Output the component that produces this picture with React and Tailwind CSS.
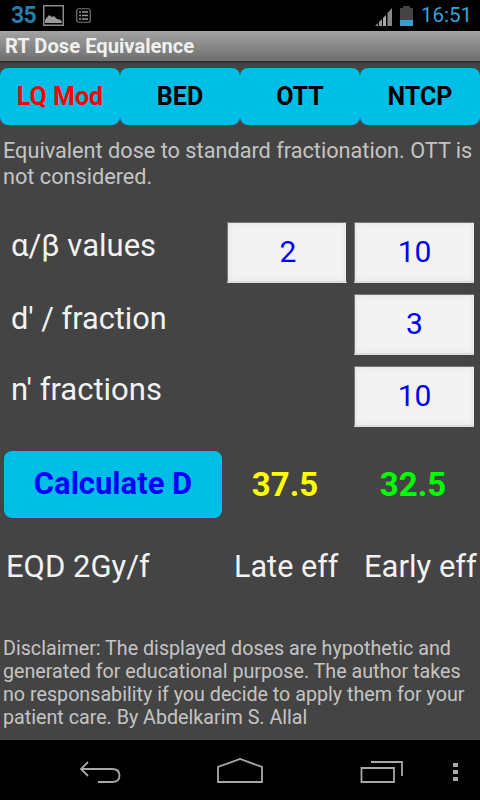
import { useState } from "react"

const tabs = ["LQ Mod", "BED", "OTT", "NTCP"]

function StatusBar() {
  return (
    <div className="h-[31px] bg-black flex items-center pl-[11px] pr-[8px]">
      <span className="text-[23px] font-bold text-[#2a7da6] leading-none tracking-tight w-[32px]">35</span>
      <svg width="21" height="21" viewBox="0 0 21 21">
        <rect x="0.75" y="0.75" width="19.5" height="19.5" fill="none" stroke="#8a8a8a" strokeWidth="1.5" />
        <path d="M2 18 L2 15 L6 10 L9 12 L11 11 L14 14 L18 15 L19 18 Z" fill="#9a9a9a" />
      </svg>
      <svg width="15" height="15" viewBox="0 0 15 15" className="ml-[12px]">
        <rect x="0.75" y="0.75" width="13.5" height="13.5" rx="2" fill="none" stroke="#777" strokeWidth="1.2" />
        <path d="M3 4h2M6 4h6M3 7.5h2M6 7.5h6M3 11h2M6 11h6" stroke="#999" strokeWidth="1.3" />
      </svg>
      <svg width="19" height="20" viewBox="0 0 19 20" className="ml-auto">
        <path d="M1 20 L4 17 V20 Z" fill="#888" />
        <path d="M5 16 L8 13 V20 H5 Z" fill="#999" />
        <path d="M9 12 L12 9 V20 H9 Z" fill="#aaa" />
        <path d="M13.5 7 L18 2 V20 H13.5 Z" fill="#888" />
      </svg>
      <div className="ml-[7px] w-[13px] h-[20px] flex flex-col items-center">
        <div className="w-[7px] h-[2px] bg-[#444]" />
        <div className="w-[13px] h-[12px] bg-[#444]" />
        <div className="w-[13px] h-[6px] bg-[#33a0d0]" />
      </div>
      <span className="ml-[8px] text-[20.5px] text-[#33a5dc] leading-none">16:51</span>
    </div>
  )
}

function TitleBar() {
  return (
    <div className="h-[32px] bg-gradient-to-b from-[#a3a3a3] to-[#6f6f6f] border-b-2 border-[#333] flex items-center pl-[5px]">
      <span className="text-[20.2px] font-bold text-[#f0f0f0] leading-none">RT Dose Equivalence</span>
    </div>
  )
}

function Field({ value, className = "" }) {
  return (
    <div className={"w-[120px] h-[61px] pb-[2px] bg-[#f3f3f3] border-t border-l border-[#777] border-b-2 border-b-[#ddd] shadow-[inset_0_0_6px_#e0e0e0] flex items-center justify-center text-[30px] text-[#0000ff] " + className}>
      {value}
    </div>
  )
}

function NavBar() {
  return (
    <div className="h-[60px] bg-black flex items-center relative">
      <svg width="480" height="60" viewBox="0 0 480 60" fill="none" stroke="#a8a8a8" strokeWidth="1.8">
        <path d="M88 22 L81 29 L88 36 M81 29 H112 Q119.5 29 119.5 35.5 Q119.5 42 112 42 H98" />
        <path d="M218 42 V27 L240 19 L262 27 V42 Z" />
        <path d="M361.5 28 H394 V42 H361.5 Z M371 22 H402 V36" />
      </svg>
      <div className="absolute left-[453px] top-[23px] flex flex-col gap-[3px]">
        <div className="w-[5px] h-[4px] bg-[#a8a8a8]" />
        <div className="w-[5px] h-[4px] bg-[#a8a8a8]" />
        <div className="w-[5px] h-[4px] bg-[#a8a8a8]" />
      </div>
    </div>
  )
}

export default function App() {
  const [active] = useState("LQ Mod")

  return (
    <div className="w-[480px] h-[800px] flex flex-col bg-[#444444] text-[#f2f2f2] overflow-hidden" style={{ fontFamily: "Roboto, sans-serif" }}>
      <StatusBar />
      <TitleBar />

      <div className="flex-1 flex flex-col">
        {/* Tabs */}
        <div className="flex mt-[5px]">
          {tabs.map(t => (
            <button
              key={t}
              className={"w-[120px] h-[57px] rounded-[8px] bg-[#00bfe6] text-[25px] font-bold " + (t === active ? "text-[#ff0000]" : "text-black")}
            >
              {t}
            </button>
          ))}
        </div>

        <p className="mt-[13px] px-[3px] text-[21.7px] leading-[26px] text-[#c4c4c4]">
          Equivalent dose to standard fractionation. OTT is not considered.
        </p>

        {/* Inputs */}
        <div className="mt-[32px] flex flex-col gap-[11px]">
          <div className="flex items-start">
            <span className="pl-[11px] pt-[5px] text-[31px] leading-[38px] flex-1">α/β values</span>
            <Field value="2" className="border-r border-r-[#444] pl-[2px]" />
            <Field value="10" className="ml-[7px] mr-[6px]" />
          </div>
          <div className="flex items-start">
            <span className="pl-[11px] pt-[6px] text-[30.7px] leading-[38px] flex-1">d' / fraction</span>
            <Field value="3" className="mr-[6px]" />
          </div>
          <div className="flex items-start">
            <span className="pl-[11px] pt-[5px] text-[31px] leading-[38px] flex-1">n' fractions</span>
            <Field value="10" className="mr-[6px]" />
          </div>
        </div>

        {/* Calculate */}
        <div className="mt-[24px] flex items-center">
          <button className="ml-[4px] w-[218px] h-[67px] pb-[1px] rounded-[8px] bg-[#00bfe6] text-[#0000ff] text-[31px] font-bold">
            Calculate D
          </button>
          <span className="w-[126px] text-center text-[33px] font-bold text-[#ffff00]">37.5</span>
          <span className="w-[130px] text-center text-[33px] font-bold text-[#00ff00]">32.5</span>
        </div>

        <div className="mt-[29px] flex text-[31px] leading-[40px] whitespace-nowrap">
          <span className="pl-[6px] w-[234px]">EQD 2Gy/f</span>
          <span className="w-[130px] text-[30.6px]">Late eff</span>
          <span>Early eff</span>
        </div>

        <p className="mt-auto mb-[11px] px-[3px] text-[19.7px] leading-[23px] text-[#c4c4c4]">
          Disclaimer: The displayed doses are hypothetic and generated for educational purpose. The author takes no responsability if you decide to apply them for your patient care. By Abdelkarim S. Allal
        </p>
      </div>

      <NavBar />
    </div>
  )
}
